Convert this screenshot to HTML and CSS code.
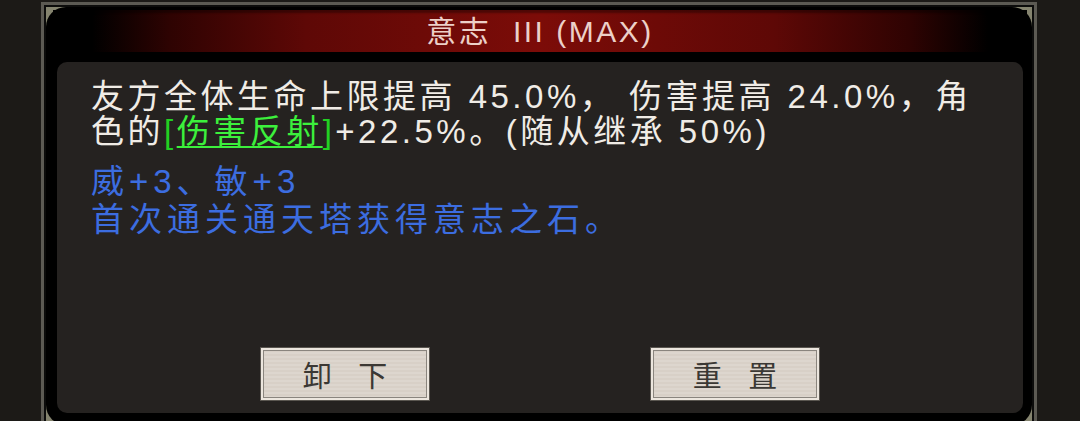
FILE: index.html
```html
<!DOCTYPE html>
<html lang="zh-CN">
<head>
  <meta charset="UTF-8">
  <title>意志 III (MAX)</title>
  <link rel="stylesheet" href="styles.css">
</head>
<body>

  <!-- Outer frame -->
  <div class="frame">
    <div class="plate">
      <div class="well">

        <!-- Title bar -->
        <div class="title-bar">
          <span class="title">意志&nbsp; III (MAX)</span>
        </div>

        <!-- Description panel -->
        <div class="panel">
          <p class="desc">
            友方全体生命上限提高 45.0%， 伤害提高 24.0%，角<br>
            色的<span class="link">[<u>伤害反射</u>]</span>+22.5%。(随从继承 50%)
          </p>
          <p class="bonus">
            威+3、敏+3<br>
            首次通关通天塔获得意志之石。
          </p>

          <div class="actions">
            <button class="btn">卸 下</button>
            <button class="btn">重 置</button>
          </div>
        </div>

      </div>
    </div>
  </div>

</body>
</html>
```

FILE: styles.css
```css
/* Reset */
* {
  margin: 0;
  padding: 0;
  box-sizing: border-box;
}

html,
body {
  height: 100%;
}

body {
  background: #1c1a17;
  overflow: hidden;
  font-family: "Liberation Sans", "Noto Sans CJK SC", sans-serif;
}

/* Frame: grey rim, black inside, olive corners behind the rounded well */
.frame {
  margin: 2px 0 0 41px;
  width: 996px;
  border: 3px solid #5c5a53;
  padding: 2px;
  background: #0c0c0b;
}

.plate {
  background: #85846f;
}

.well {
  display: flex;
  flex-direction: column;
  background: #000;
  border-radius: 20px;
  padding: 3px 9px 12px 11px;
}

/* Title bar */
.title-bar {
  height: 42px;
  margin: 0 -4px;
  display: flex;
  align-items: center;
  justify-content: center;
  background: linear-gradient(to right,
    #000 4%,
    #2e0302 12%,
    #5e0806 26%,
    #7c0c08 50%,
    #5e0806 74%,
    #2e0302 88%,
    #000 96%);
  box-shadow: inset 0 3px 2px rgba(0, 0, 0, 0.35);
}

.title {
  color: #ecd0c8;
  font-size: 30px;
  letter-spacing: 2.5px;
  line-height: 1;
  padding-top: 2px;
}

/* Panel with the text */
.panel {
  margin-top: 10px;
  height: 351px;
  background: #252220;
  border-radius: 10px;
  padding: 17px 20px 12px 34px;
  display: flex;
  flex-direction: column;
}

.desc {
  color: #f0ece6;
  font-size: 33px;
  line-height: 35px;
  letter-spacing: 3.5px;
  white-space: nowrap;
}

.link {
  display: inline-block;
  line-height: 35px;
  color: #22d022;
}

.link u {
  color: #3cf03c;
  text-decoration-thickness: 2px;
  text-underline-offset: 3px;
}

.bonus {
  margin-top: 14px;
  color: #3c6de0;
  font-size: 33px;
  line-height: 38px;
  letter-spacing: 5px;
  white-space: nowrap;
}

/* Buttons */
.actions {
  margin-top: auto;
  display: flex;
  justify-content: center;
  gap: 220px;
  padding-right: 14px;
}

.btn {
  width: 170px;
  height: 54px;
  font-family: "Noto Sans CJK SC", sans-serif;
  font-size: 29px;
  letter-spacing: 10px;
  padding-left: 10px;
  color: #3b3834;
  background: repeating-linear-gradient(to bottom,
    #ddd6ce 0px, #ddd6ce 2px, #d8d0c7 2px, #d8d0c7 4px);
  border: 1px solid #5a5650;
  box-shadow: inset 0 0 0 2px #ece6de, inset 0 0 0 3px #8a857e;
  cursor: pointer;
}
```
